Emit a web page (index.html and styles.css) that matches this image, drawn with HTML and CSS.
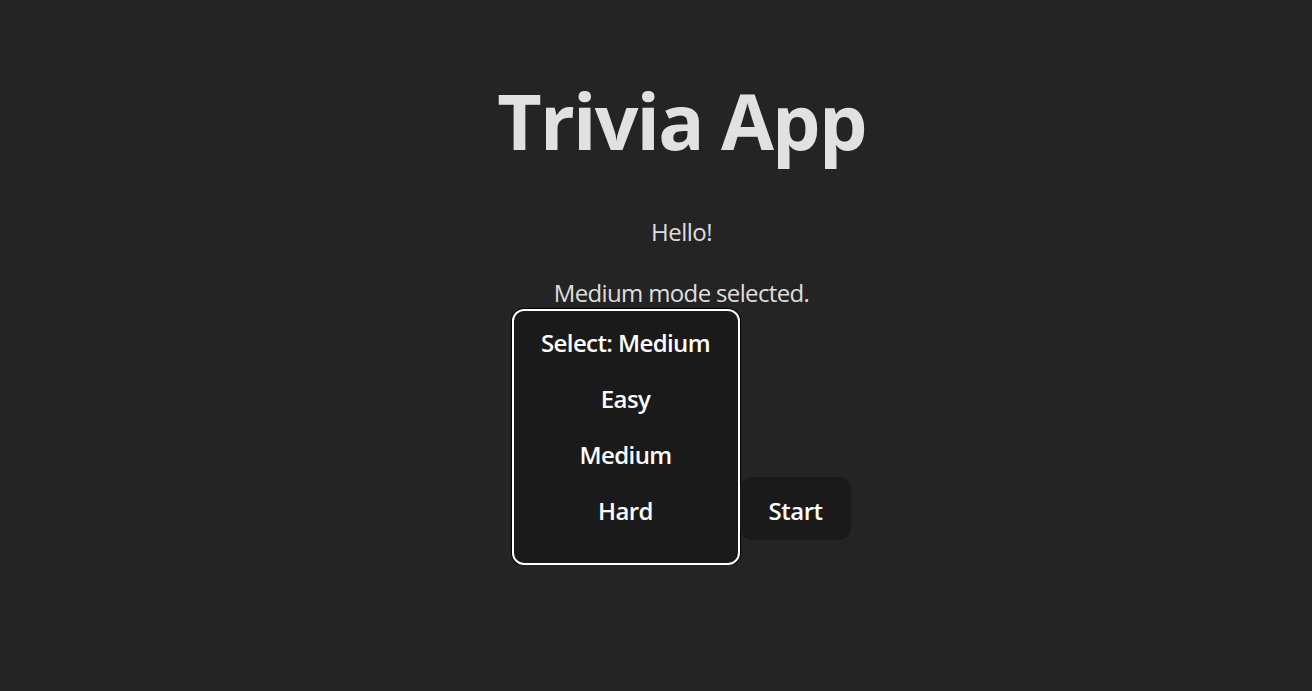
FILE: index.html
```html
<!DOCTYPE html>
<html lang="en">
<head>
<meta charset="utf-8">
<title>Trivia App</title>
<link rel="stylesheet" href="styles.css">
</head>
<body>
<main class="app">
  <h1 class="title">Trivia App</h1>
  <p class="greeting">Hello!</p>
  <p class="status">Medium mode selected.</p>
  <div class="controls">
    <div class="select" role="listbox">
      <div class="option">Select: Medium</div>
      <div class="option">Easy</div>
      <div class="option">Medium</div>
      <div class="option">Hard</div>
    </div>
    <button class="start" type="button">Start</button>
  </div>
</main>
</body>
</html>
```
FILE: styles.css
```css
html, body {
  margin: 0;
  padding: 0;
  background: #242424;
}
body {
  font-family: "Open Sans", "Noto Sans", sans-serif;
  color: rgba(255, 255, 255, 0.87);
  font-size: 24px;
}
.app {
  padding: 79px 0 0 51px;
  text-align: center;
}
.title {
  margin: 0;
  font-size: 76.8px;
  line-height: 84.5px;
  font-weight: 700;
  letter-spacing: -1.8px;
  color: #e1e1e1;
}
.greeting {
  margin: 50px 0 0;
  line-height: 36px;
  letter-spacing: -0.5px;
}
.status {
  margin: 25px 0 -2px;
  line-height: 36px;
  letter-spacing: -0.65px;
}
.controls {
  display: flex;
  justify-content: center;
  align-items: last baseline;
}
.select {
  box-sizing: border-box;
  width: 228px;
  padding: 4px 0 24px;
  background: #1a1a1a;
  border: 2px solid #ffffff;
  border-radius: 12px;
  box-shadow: 0 0 0 1px #000;
  color: #fff;
  font-weight: 600;
  letter-spacing: -0.6px;
}
.option {
  line-height: 56px;
}
.start {
  font-family: inherit;
  font-size: 24px;
  font-weight: 600;
  letter-spacing: -0.5px;
  color: #fff;
  background: #1a1a1a;
  border: 1px solid transparent;
  border-radius: 12px;
  padding: 4px 28px 0;
  height: 63px;
  line-height: 57px;
  cursor: pointer;
}
```
